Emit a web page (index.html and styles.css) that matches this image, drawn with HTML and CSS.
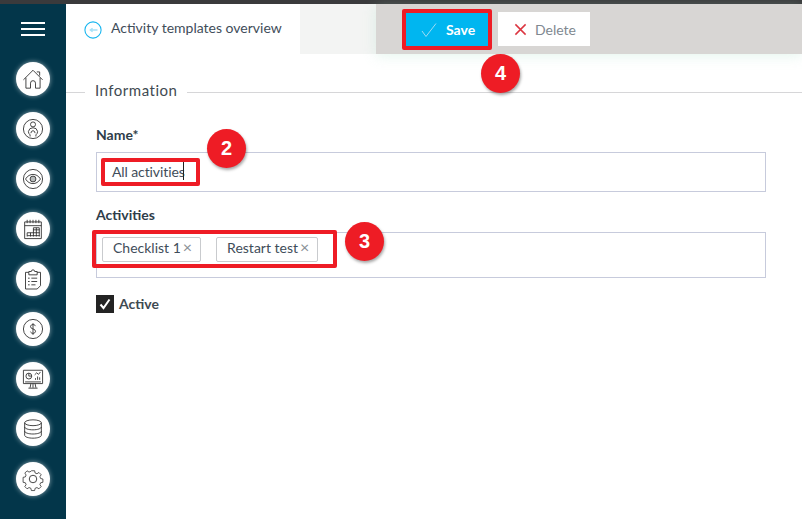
FILE: index.html
```html
<!DOCTYPE html>
<html lang="en">
<head>
<meta charset="utf-8">
<title>Activity templates</title>
<link rel="stylesheet" href="styles.css">
</head>
<body>
<div class="topstrip"></div>
<div class="app">
  <nav class="sidebar">
    <div class="burger"><span></span><span></span><span></span></div>
    <a class="nav-btn"><svg viewBox="0 0 24 24"><path d="M.5 13 12 1.500 23.500 13M3.500 10.500V23H9v-6a3 3 0 0 1 6 0v6h5.500V10.500M16.500 3.500H20V8"/></svg></a>
    <a class="nav-btn"><svg viewBox="0 0 24 24"><circle cx="12" cy="12" r="11.500"/><circle cx="12" cy="6.500" r="3"/><path d="M8.500 21v-2a5 5 0 0 1-2-4A5.500 5.500 0 0 1 12 10.500a5.500 5.500 0 0 1 5.500 4.500 5 5 0 0 1-2 4v2M9.500 17a3 3 0 0 1 2.500-3 3 3 0 0 1 2.500 3"/></svg></a>
    <a class="nav-btn"><svg viewBox="0 0 24 24"><circle cx="12" cy="12" r="11.500"/><path d="M3 12c2.500-4 5.800-5.500 9-5.500s6.500 1.500 9 5.500c-2.500 4-5.800 5.500-9 5.500S5.500 16 3 12Z"/><circle cx="12" cy="12" r="3.500" class="tint"/></svg></a>
    <a class="nav-btn"><svg viewBox="0 0 24 24"><path d="M2 3.500h20v20H2zM2 8h20M5 1v4M8.500 1v4M12 1v4M15.500 1v4M19 1v4M5 20h15M5 16.500h15M12 13h8M5 16.500V21M9 16.500V21M12.500 10.500V21M16 10.500V21M19.500 10.500V21M12.500 10.500h7"/></svg></a>
    <a class="nav-btn"><svg viewBox="0 0 24 24"><path d="M7 4H3v20h14l4-4V4h-4M7 7V3h3a2 2 0 0 1 4 0h3v4ZM6 11h2M6 15h2M6 19h2M10 11h7M10 15h7M10 19h5"/></svg></a>
    <a class="nav-btn"><svg viewBox="0 0 24 24"><circle cx="12" cy="12" r="11.500"/><path d="M15 8.500c-.5-1.200-1.600-1.800-3-1.800-1.700 0-3 .9-3 2.500 0 3.500 6 2 6 5.500 0 1.500-1.300 2.500-3 2.500-1.500 0-2.600-.7-3-2M12 5v14"/></svg></a>
    <a class="nav-btn"><svg viewBox="0 0 24 24"><path d="M.5 1.500h23v16H.5zM12 17.500v5M6.500 23h11M8.500 22.500l1-5M15.500 22.500l-1-5M2.500 15.500h19"/><circle cx="7" cy="8.500" r="3.500"/><path d="M7 8.500V5M7 8.500h3.500M14 7l2.500-2.500 2 2 2.500-3M15 13v-2M17.500 13V9M20 13v-3"/></svg></a>
    <a class="nav-btn"><svg viewBox="0 0 24 24"><ellipse cx="12" cy="4.500" rx="10" ry="3.500"/><path d="M2 4.500v15c0 2 4.500 3.500 10 3.500s10-1.500 10-3.500v-15M2 9.500c0 2 4.500 3.500 10 3.500s10-1.500 10-3.500M2 14.500c0 2 4.500 3.500 10 3.500s10-1.500 10-3.500"/></svg></a>
    <a class="nav-btn"><svg viewBox="0 0 24 24"><circle cx="12" cy="12" r="4.500"/><path d="M9.800 1h4.400l.6 3 2.500 1 2.600-1.700 3 3-1.700 2.600 1 2.500 3 .6v4.400l-3 .6-1 2.500 1.700 2.600-3 3-2.600-1.700-2.500 1-.6 3H9.800l-.6-3-2.500-1-2.600 1.700-3-3 1.700-2.600-1-2.500-3-.6V9.800l3-.6 1-2.500L1.100 4.100l3-3 2.600 1.700 2.500-1Z" transform="translate(1.200 1.200) scale(.9)"/></svg></a>
  </nav>
  <main class="main">
    <header class="topbar">
      <a class="tab">
        <svg class="back" viewBox="0 0 20 20"><circle cx="10" cy="10" r="9"/><path d="M15 10H7M9.500 8 7 10l2.500 2"/></svg>
        <span>Activity templates overview</span>
      </a>
      <div class="gap"></div>
      <div class="toolbar">
        <div class="save-wrap">
          <button class="btn btn-save"><svg viewBox="0 0 16 16"><path d="M1 9l4 5.500L15 1.500"/></svg>Save</button>
        </div>
        <button class="btn btn-delete"><svg viewBox="0 0 14 14"><path d="M1.500 1.500l11 11M12.500 1.500l-11 11"/></svg>Delete</button>
      </div>
    </header>
    <section class="content">
      <div class="legend"><span>Information</span></div>
      <div class="form">
        <label class="label">Name*</label>
        <div class="input">
          <div class="mark-name">All activities<i class="caret"></i></div>
        </div>
        <label class="label label-act">Activities</label>
        <div class="tags">
          <div class="mark-tags">
            <span class="tag">Checklist 1<b>×</b></span>
            <span class="tag">Restart test<b>×</b></span>
          </div>
        </div>
        <div class="check">
          <span class="box"><svg viewBox="0 0 18 18"><path d="M4.500 9.500l3 3.500 6-8.500"/></svg></span>
          <span class="check-text">Active</span>
        </div>
      </div>
    </section>
  </main>
</div>
<span class="step step-2">2</span>
<span class="step step-3">3</span>
<span class="step step-4">4</span>
</body>
</html>
```
FILE: styles.css
```css
* { box-sizing: border-box; }
html, body { margin: 0; height: 100%; overflow: hidden; }
body { width: 802px; height: 519px; position: relative; background: #fff; font-family: Lato, "Liberation Sans", sans-serif; color: #33414e; }
.topstrip { height: 4px; background: #3a3a3c; }
.app { display: flex; height: 515px; }
.sidebar { width: 66px; flex: none; background: #03364a; display: flex; flex-direction: column; align-items: center; padding: 18px 0 0 0; }
.burger { width: 24px; height: 14px; display: flex; flex-direction: column; justify-content: space-between; margin-bottom: 26px; }
.burger span { height: 2px; background: #fff; display: block; }
.nav-btn { width: 34px; height: 34px; margin-bottom: 16px; border-radius: 50%; background: #fff; box-shadow: 0 0 5px rgba(255,255,255,.55); display: flex; align-items: center; justify-content: center; }
.nav-btn svg { width: 20px; height: 20px; fill: none; stroke: #2e2e2e; stroke-width: 1.050; overflow: visible; }
.nav-btn .tint { fill: #b8bcbc; }
.main { flex: 1; min-width: 0; }
.topbar { display: flex; height: 50px; }
.tab { width: 234px; display: flex; align-items: center; padding: 0 0 0 18px; gap: 9px; font-size: 14px; color: #3f4d5a; background: #fff; }
.tab span { margin-bottom: 3px; }
.back { width: 18px; height: 18px; margin-top: 2px; fill: none; stroke: #17b5ef; stroke-width: 1.200; }
.back path { stroke: #a6e0f7; stroke-width: 1.600; }
.gap { width: 76px; background: #f3f4f3; }
.toolbar { flex: 1; background: #d8d6d4; display: flex; align-items: flex-start; padding: 5px 0 0 26px; gap: 6px; box-shadow: 0 2px 12px rgba(170,225,200,.3); }
.save-wrap { border: 4px solid #ee1c25; border-radius: 2px; height: 41px; width: 90px; }
.btn { border: 0; font-family: inherit; font-size: 14px; display: flex; align-items: center; padding: 0; }
.btn-save { width: 82px; height: 33px; background: #00b6f0; color: #fff; font-weight: 700; padding-left: 15px; gap: 9px; }
.btn-save svg { width: 16px; height: 16px; fill: none; stroke: #9fdcf3; stroke-width: 1; }
.btn-delete { width: 92px; height: 34px; margin-top: 3px; background: #fff; color: #808890; padding-left: 16px; gap: 8px; }
.btn-delete svg { width: 13px; height: 13px; fill: none; stroke: #dc3540; stroke-width: 1.600; }
.content { padding-top: 18px; }
.legend { display: flex; align-items: center; height: 40px; font-size: 15px; }
.legend::before { content: ""; width: 19px; height: 1px; background: #d6d6d8; flex: none; }
.legend::after { content: ""; flex: 1; height: 1px; background: #d6d6d8; }
.legend span { padding: 0 10px; color: #3f4a52; letter-spacing: .5px; margin-bottom: 5px; }
.form { padding: 14px 36px 0 30px; }
.label { display: block; font-size: 14px; font-weight: 700; color: #2f3d4a; line-height: 17px; }
.input { margin-top: 9px; height: 40px; border: 1px solid #c7cbdc; padding: 5px 0 0 4px; }
.mark-name { width: 99px; height: 28px; border: 4px solid #ee1c25; border-radius: 2px; font-size: 14px; letter-spacing: -.1px; line-height: 20px; padding-left: 7px; color: #3f4d5a; white-space: nowrap; }
.caret { display: inline-block; width: 1px; height: 18px; background: #222; vertical-align: -3px; margin-left: -2px; }
.label-act { margin-top: 14px; }
.tags { margin-top: 9px; height: 46px; border: 1px solid #c7cbdc; position: relative; }
.mark-tags { position: absolute; left: -5px; top: -3px; width: 245px; height: 38px; border: 4px solid #ee1c25; border-radius: 2px; display: flex; align-items: center; gap: 15px; padding-left: 6px; }
.tag { height: 25px; padding: 0 8px 0 10px; border: 1px solid #c9cbce; border-radius: 2px; background: #fff; font-size: 14px; line-height: 18px; color: #3f4d5a; white-space: nowrap; }
.tag b { font-weight: 400; font-size: 16px; color: #8a9096; margin-left: 2px; }
.check { display: flex; align-items: center; gap: 5px; margin-top: 17px; font-size: 14px; font-weight: 700; color: #3f4a52; height: 18px; }
.check-text { margin-bottom: 2px; }
.box { width: 18px; height: 18px; background: #232323; display: block; }
.box svg { width: 18px; height: 18px; display: block; fill: none; stroke: #fff; stroke-width: 2; }
.step { position: absolute; width: 39px; height: 39px; border-radius: 50%; background: #ee1c25; color: #fff; font: 700 20px/39px "Liberation Sans", sans-serif; text-align: center; box-shadow: 1px 2px 3px rgba(0,0,0,.35); }
.step-2 { left: 207px; top: 129px; }
.step-3 { left: 345px; top: 222px; }
.step-4 { left: 481px; top: 54px; }
```
